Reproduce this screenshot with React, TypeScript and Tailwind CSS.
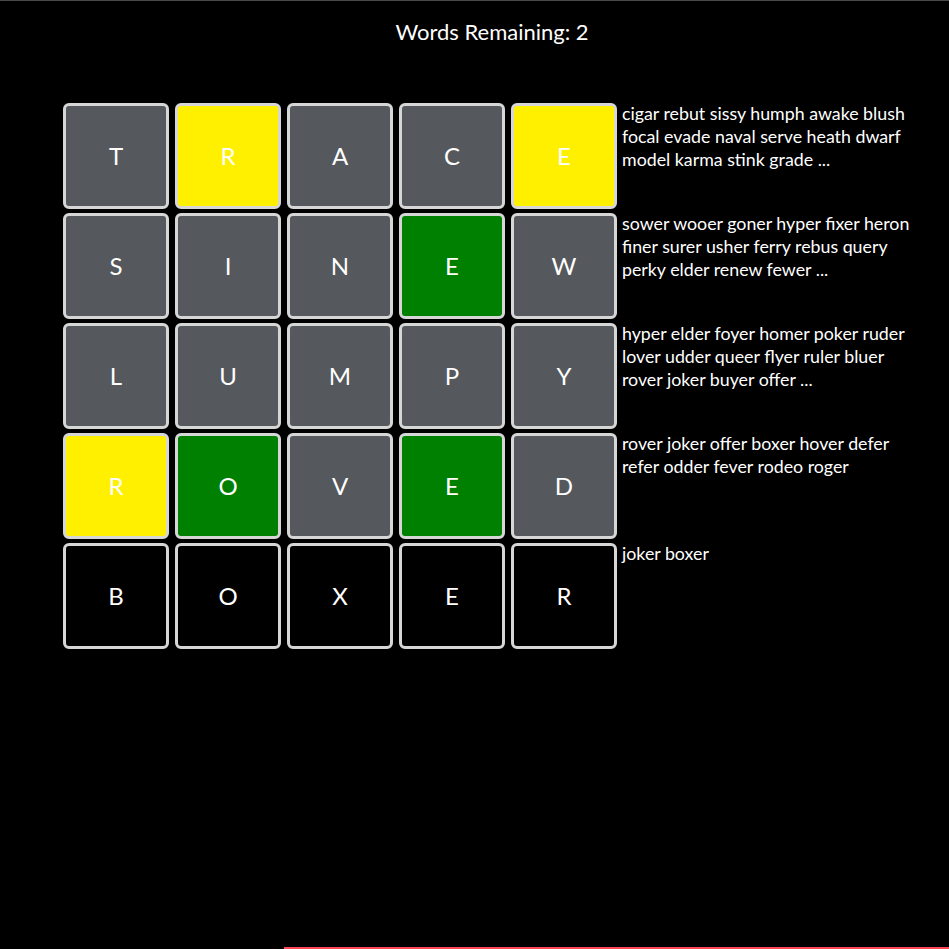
import React from "react";

type Tile = { l: string; c: "g" | "y" | "n" | "b" };

const rows: { tiles: Tile[]; words: string[] }[] = [
  {
    tiles: [
      { l: "T", c: "n" },
      { l: "R", c: "y" },
      { l: "A", c: "n" },
      { l: "C", c: "n" },
      { l: "E", c: "y" },
    ],
    words: [
      "cigar rebut sissy humph awake blush",
      "focal evade naval serve heath dwarf",
      "model karma stink grade ...",
    ],
  },
  {
    tiles: [
      { l: "S", c: "n" },
      { l: "I", c: "n" },
      { l: "N", c: "n" },
      { l: "E", c: "g" },
      { l: "W", c: "n" },
    ],
    words: [
      "sower wooer goner hyper fixer heron",
      "finer surer usher ferry rebus query",
      "perky elder renew fewer ...",
    ],
  },
  {
    tiles: [
      { l: "L", c: "n" },
      { l: "U", c: "n" },
      { l: "M", c: "n" },
      { l: "P", c: "n" },
      { l: "Y", c: "n" },
    ],
    words: [
      "hyper elder foyer homer poker ruder",
      "lover udder queer flyer ruler bluer",
      "rover joker buyer offer ...",
    ],
  },
  {
    tiles: [
      { l: "R", c: "y" },
      { l: "O", c: "g" },
      { l: "V", c: "n" },
      { l: "E", c: "g" },
      { l: "D", c: "n" },
    ],
    words: [
      "rover joker offer boxer hover defer",
      "refer odder fever rodeo roger",
    ],
  },
  {
    tiles: [
      { l: "B", c: "b" },
      { l: "O", c: "b" },
      { l: "X", c: "b" },
      { l: "E", c: "b" },
      { l: "R", c: "b" },
    ],
    words: ["joker boxer"],
  },
];

function bg(c: Tile["c"]) {
  if (c === "g") return "bg-[#008000]";
  if (c === "y") return "bg-[#fff000]";
  if (c === "n") return "bg-[#55585c]";
  return "bg-black";
}

export default function App() {
  return (
    <div
      className="min-h-[949px] w-full bg-black text-white flex flex-col border-t border-[#4a4a4a]"
      style={{ fontFamily: "Lato, 'Open Sans', sans-serif" }}
    >
      <div className="pl-[35px] pt-[17px] text-center text-[22px] leading-[28px]">
        Words Remaining: 2
      </div>
      <div className="mt-[57px] ml-[63px] flex flex-col gap-[4px]">
        {rows.map((r, i) => (
          <div key={i} className="flex items-start">
            <div className="flex gap-[6px]">
              {r.tiles.map((t, j) => (
                <div
                  key={j}
                  className={`w-[106px] h-[106px] rounded-[6px] border-[3px] border-[#d6d6d6] flex items-center justify-center text-[24px] ${bg(
                    t.c
                  )}`}
                >
                  {t.l}
                </div>
              ))}
            </div>
            <div className="ml-[5px] -mt-[1px] text-[17.8px] leading-[23px]">
              {r.words.map((w, k) => (
                <div key={k} className="whitespace-nowrap">
                  {w}
                </div>
              ))}
            </div>
          </div>
        ))}
      </div>
      <div className="flex-1" />
      <div className="ml-[284px] h-[2px] bg-[#ff4757]" />
    </div>
  );
}
